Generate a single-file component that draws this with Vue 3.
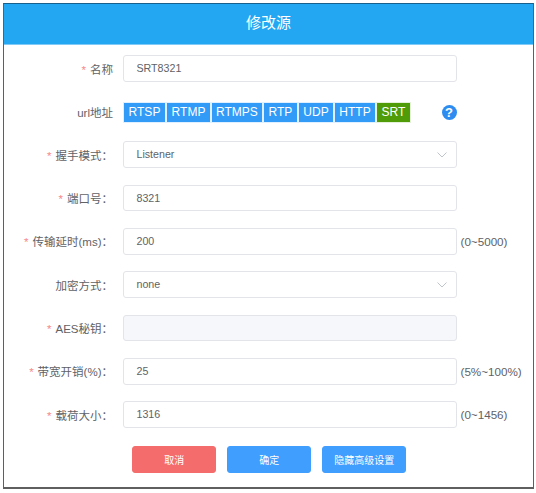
<script setup>
const protocols = [
  { name: 'RTSP', width: 41 },
  { name: 'RTMP', width: 43 },
  { name: 'RTMPS', width: 50 },
  { name: 'RTP', width: 33 },
  { name: 'UDP', width: 34 },
  { name: 'HTTP', width: 40 },
  { name: 'SRT', width: 33, active: true }
]
</script>

<template>
  <div class="page">
    <div class="dialog">
      <header class="head">修改源</header>
      <form class="form" @submit.prevent>
        <div class="row">
          <label class="label"><i>*</i>名称</label>
          <div class="field">SRT8321</div>
        </div>
        <div class="row url">
          <label class="label">url地址</label>
          <div class="tabs">
            <span
              v-for="p in protocols"
              :key="p.name"
              class="tab"
              :class="{ active: p.active }"
              :style="{ width: p.width + 'px' }"
            >{{ p.name }}</span>
          </div>
          <span class="help">?</span>
        </div>
        <div class="row">
          <label class="label"><i>*</i>握手模式：</label>
          <div class="field select">
            Listener
            <svg class="chev" viewBox="0 0 10 6" width="10" height="6"><path d="M.5.5 5 5 9.500.5" fill="none" stroke="#c0c4cc" stroke-width="1"/></svg>
          </div>
        </div>
        <div class="row">
          <label class="label"><i>*</i>端口号：</label>
          <div class="field">8321</div>
        </div>
        <div class="row">
          <label class="label"><i>*</i>传输延时(ms)：</label>
          <div class="field">200</div>
          <span class="hint">(0~5000)</span>
        </div>
        <div class="row">
          <label class="label">加密方式：</label>
          <div class="field select">
            none
            <svg class="chev" viewBox="0 0 10 6" width="10" height="6"><path d="M.5.5 5 5 9.500.5" fill="none" stroke="#c0c4cc" stroke-width="1"/></svg>
          </div>
        </div>
        <div class="row">
          <label class="label"><i>*</i>AES秘钥：</label>
          <div class="field disabled"></div>
        </div>
        <div class="row">
          <label class="label"><i>*</i>带宽开销(%)：</label>
          <div class="field">25</div>
          <span class="hint">(5%~100%)</span>
        </div>
        <div class="row">
          <label class="label"><i>*</i>载荷大小：</label>
          <div class="field">1316</div>
          <span class="hint">(0~1456)</span>
        </div>
        <div class="actions">
          <button class="btn danger" type="button">取消</button>
          <button class="btn" type="button">确定</button>
          <button class="btn" type="button">隐藏高级设置</button>
        </div>
      </form>
    </div>
  </div>
</template>

<style>
html, body { background: #fff; }
</style>

<style scoped>
.page {
  width: 536px;
  height: 493px;
  padding: 3px 2px 0 3px;
  box-sizing: border-box;
  font-family: "Liberation Sans", "Noto Sans CJK SC", sans-serif;
  color: #606266;
}
.dialog {
  width: 531px;
  height: 486px;
  box-sizing: border-box;
  border: 1px solid #5f5f5f;
  border-top-color: #17608e;
  border-bottom-width: 2px;
  background: #fff;
}
.head {
  height: 40px;
  background: #23a7f3;
  border-bottom: 1px solid #7fcaf6;
  color: #fff;
  font-size: 15px;
  line-height: 37px;
  text-align: center;
}
.form {
  padding-top: 10.33px;
}
.row {
  display: flex;
  align-items: center;
  height: 26.67px;
  margin-bottom: 16.67px;
}
.label {
  width: 109px;
  flex: none;
  margin-right: 10px;
  text-align: right;
  font-size: 11.5px;
  white-space: nowrap;
}
.label i {
  color: #f78989;
  font-style: normal;
  margin-right: 4px;
}
.field {
  position: relative;
  width: 334px;
  height: 26.67px;
  flex: none;
  box-sizing: border-box;
  border: 1px solid #e2e4ea;
  border-radius: 3px;
  padding-left: 12.5px;
  font-size: 10.67px;
  line-height: 25px;
  background: #fff;
}
.field.disabled {
  background: #f5f7fa;
}
.chev {
  position: absolute;
  right: 9px;
  top: 10px;
}
.url {
  height: 19px;
  margin-top: 21px;
  margin-bottom: 19.33px;
}
.tabs {
  display: flex;
  gap: 2px;
  margin-left: 1px;
}
.tab {
  height: 19px;
  box-sizing: border-box;
  background: #329bf8;
  box-shadow: 0 0 0 1px rgba(50, 155, 248, .15);
  color: #fff;
  font-size: 12px;
  line-height: 19px;
  text-align: center;
}
.tab.active {
  background: #509c08;
  box-shadow: 0 0 0 1px rgba(80, 156, 8, .15);
}
.help {
  width: 15px;
  height: 15px;
  margin-left: 31.5px;
  border-radius: 50%;
  background: #2d8cf0;
  color: #fff;
  font-size: 13px;
  font-weight: 700;
  line-height: 15px;
  text-align: center;
}
.hint {
  margin-left: 3.5px;
  font-size: 11.67px;
  white-space: nowrap;
}
.actions {
  display: flex;
  gap: 11px;
  padding-left: 128.33px;
  margin-top: 18.33px;
}
.btn {
  width: 84px;
  height: 26.67px;
  padding: 0;
  border: 1px solid #409eff;
  border-radius: 3px;
  background: #409eff;
  color: #fff;
  font-family: inherit;
  font-size: 10px;
}
.btn.danger {
  background: #f56c6c;
  border-color: #f56c6c;
}
</style>
